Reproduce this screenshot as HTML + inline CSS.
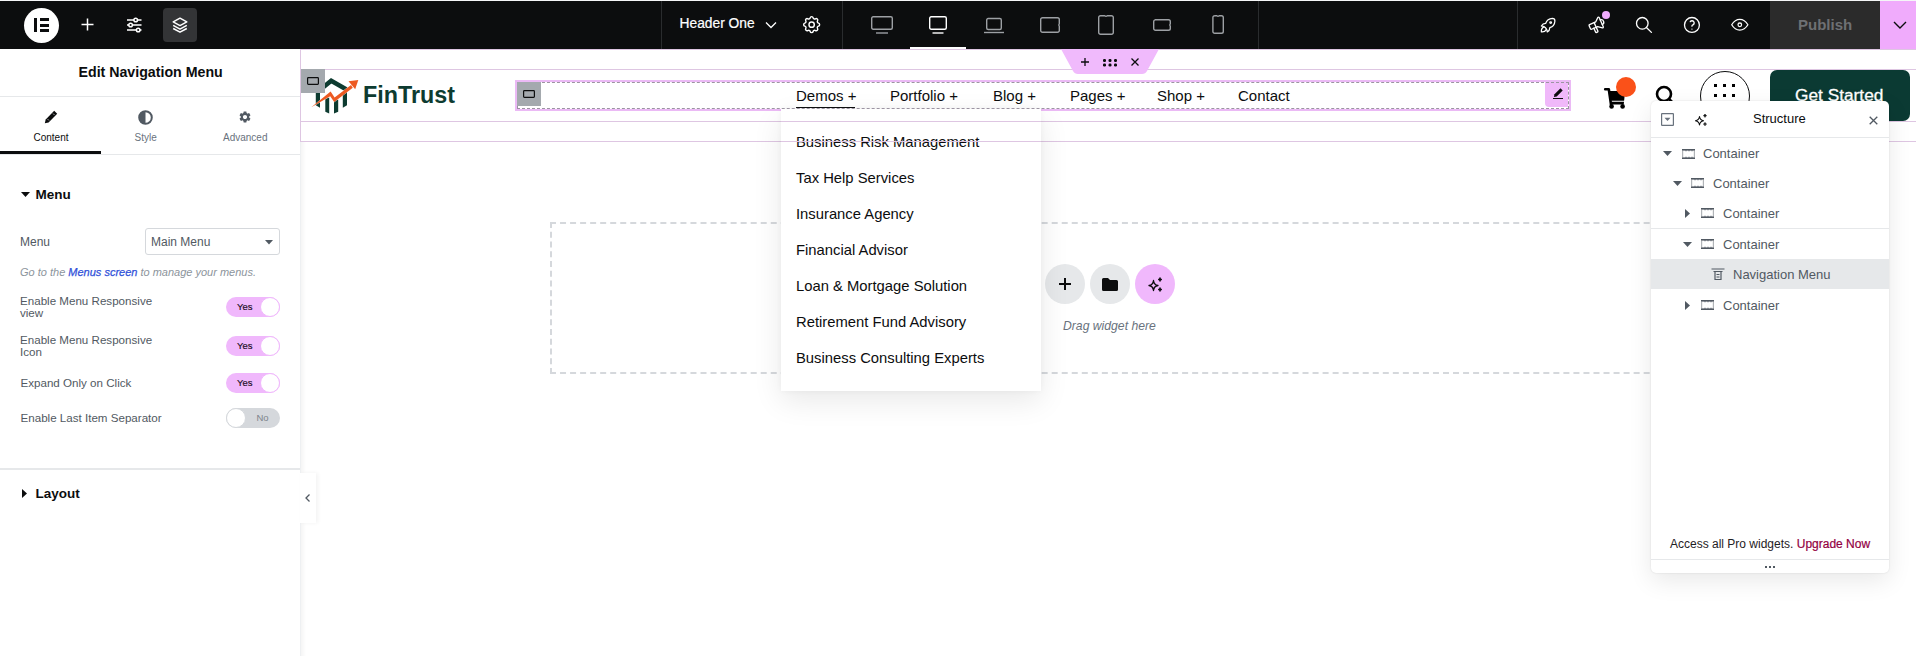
<!DOCTYPE html>
<html><head><meta charset="utf-8">
<style>
*{box-sizing:border-box;margin:0;padding:0}
html,body{width:1916px;height:656px;overflow:hidden;background:#fff;font-family:"Liberation Sans",sans-serif;position:relative}
.a{position:absolute}
.t{position:absolute;white-space:nowrap;line-height:1}
svg{position:absolute;overflow:visible}
#top{position:absolute;left:0;top:0;width:1916px;height:49px;background:#0c0d0e;border-top:1px solid #f5f6f7}
.sep{position:absolute;top:1px;width:1px;height:48px;background:#2a2c2e}
.tg{position:absolute;width:54px;height:20px;border-radius:10px}
.tg.on{background:#f0b8fc}
.tg.off{background:#d5d8dc}
.tg span{position:absolute;top:5.2px;font-size:9.5px;line-height:9.5px;-webkit-text-stroke:0.15px currentColor}
.tg.on span{left:11px;color:#1a0b22}
.tg.off span{left:30.5px;color:#7d848c;-webkit-text-stroke:0}
.tg i{position:absolute;top:0;width:20px;height:20px;border-radius:50%;background:#fff}
.tg.on i{right:0;border:1px solid #f0b8fc}
.tg.off i{left:0;border:1px solid #d5d8dc}
.dd{left:796px;font-size:14.8px;color:#0c0d0e}
.nv{top:88px;font-size:15px;color:#0c0d0e}
.st{font-size:13px;color:#515962}
.ad{width:9px;height:9px;fill:#515962}
.ci{width:13px;height:10px}
</style></head><body>

<!-- ============ TOP BAR ============ -->
<div id="top"></div>
<!-- elementor logo -->
<div class="a" style="left:24px;top:8px;width:35px;height:35px;border-radius:50%;background:#fff"></div>
<div class="a" style="left:34px;top:18px;width:3px;height:14px;background:#0c0d0e"></div>
<div class="a" style="left:40px;top:18px;width:9px;height:3px;background:#0c0d0e"></div>
<div class="a" style="left:40px;top:23.5px;width:9px;height:3px;background:#0c0d0e"></div>
<div class="a" style="left:40px;top:29px;width:9px;height:3px;background:#0c0d0e"></div>
<!-- plus -->
<svg style="left:81px;top:18px" width="13" height="13" viewBox="0 0 13 13"><path d="M6.5 0.5v12M0.5 6.5h12" stroke="#fff" stroke-width="1.5"/></svg>
<!-- sliders -->
<svg style="left:126px;top:17px" width="16" height="16" viewBox="0 0 16 16" fill="none" stroke="#fff" stroke-width="1.5"><path d="M1 3h14.5M1 8h14.5M1 13h14.5" /><circle cx="9.7" cy="3" r="1.8" fill="#0c0d0e"/><circle cx="4.6" cy="8" r="1.8" fill="#0c0d0e"/><circle cx="12.2" cy="13" r="1.8" fill="#0c0d0e"/></svg>
<!-- layers -->
<div class="a" style="left:163px;top:8px;width:34px;height:34px;border-radius:4px;background:#333436"></div>
<svg style="left:172px;top:17px" width="16" height="16" viewBox="0 0 16 16" fill="none" stroke="#fff" stroke-width="1.5" stroke-linejoin="round"><path d="M8 1.2L14.8 4.9L8 8.6L1.2 4.9Z"/><path d="M1.2 8.4L8 12.1L14.8 8.4"/><path d="M1.2 11.5L8 15.2L14.8 11.5"/></svg>

<div class="sep" style="left:661px"></div>
<div class="t" style="left:679.5px;top:17px;font-size:13.8px;color:#fff;-webkit-text-stroke:0.2px #fff">Header One</div>
<svg style="left:765px;top:21px" width="12" height="8" viewBox="0 0 12 8" fill="none" stroke="#fff" stroke-width="1.3"><path d="M1 1.5L6 6.5L11 1.5"/></svg>
<!-- gear -->
<svg style="left:801.3px;top:14.3px" width="21.3" height="21.3" viewBox="0 0 24 24" fill="none" stroke="#fff" stroke-width="1.6" stroke-linecap="round" stroke-linejoin="round"><path d="M10.325 4.317c.426 -1.756 2.924 -1.756 3.35 0a1.724 1.724 0 0 0 2.573 1.066c1.543 -.94 3.31 .826 2.37 2.37a1.724 1.724 0 0 0 1.065 2.572c1.756 .426 1.756 2.924 0 3.35a1.724 1.724 0 0 0 -1.066 2.573c.94 1.543 -.826 3.31 -2.37 2.37a1.724 1.724 0 0 0 -2.572 1.065c-.426 1.756 -2.924 1.756 -3.35 0a1.724 1.724 0 0 0 -2.573 -1.066c-1.543 .94 -3.31 -.826 -2.37 -2.37a1.724 1.724 0 0 0 -1.065 -2.572c-1.756 -.426 -1.756 -2.924 0 -3.35a1.724 1.724 0 0 0 1.066 -2.573c-.94 -1.543 .826 -3.31 2.37 -2.37c1 .608 2.296 .07 2.572 -1.065z"/><circle cx="12" cy="12" r="3"/></svg>
<div class="sep" style="left:842px"></div>

<!-- devices -->
<svg style="left:871px;top:16px" width="22" height="18" viewBox="0 0 22 18" fill="none" stroke="#9da0a4" stroke-width="1.4"><rect x="0.7" y="0.7" width="20.6" height="12.6" rx="1.5"/><path d="M5 17h12"/></svg>
<svg style="left:929px;top:16px" width="18" height="18" viewBox="0 0 18 18" fill="none" stroke="#fff" stroke-width="1.4"><rect x="0.7" y="0.7" width="16.6" height="12.6" rx="1.5"/><path d="M3.5 17h11"/></svg>
<div class="a" style="left:910px;top:47px;width:56px;height:2px;background:#fff"></div>
<svg style="left:984px;top:17px" width="20" height="17" viewBox="0 0 20 17" fill="none" stroke="#9da0a4" stroke-width="1.4"><rect x="2.7" y="1.5" width="14.6" height="11" rx="1.5"/><path d="M0 15.5h20"/></svg>
<svg style="left:1040px;top:17px" width="20" height="16" viewBox="0 0 20 16" fill="none" stroke="#9da0a4" stroke-width="1.4"><path d="M2.5 0.7h15a1.8 1.8 0 0 1 1.8 1.8v4.1q-1 1.4 0 2.8v4.1a1.8 1.8 0 0 1-1.8 1.8h-15a1.8 1.8 0 0 1-1.8-1.8v-11a1.8 1.8 0 0 1 1.8-1.8z"/></svg>
<svg style="left:1098px;top:15px" width="16" height="20" viewBox="0 0 16 20" fill="none" stroke="#9da0a4" stroke-width="1.4"><path d="M2.5 0.7h4.1q1.4 1 2.8 0h4.1a1.8 1.8 0 0 1 1.8 1.8v15a1.8 1.8 0 0 1-1.8 1.8h-11a1.8 1.8 0 0 1-1.8-1.8v-15a1.8 1.8 0 0 1 1.8-1.8z"/></svg>
<svg style="left:1153px;top:19px" width="18" height="12" viewBox="0 0 18 12" fill="none" stroke="#9da0a4" stroke-width="1.4"><path d="M2.5 0.7h13a1.8 1.8 0 0 1 1.8 1.8v2.2q-1 1.3 0 2.6v2.2a1.8 1.8 0 0 1-1.8 1.8h-13a1.8 1.8 0 0 1-1.8-1.8v-6.8a1.8 1.8 0 0 1 1.8-1.8z"/></svg>
<svg style="left:1212px;top:15px" width="12" height="19" viewBox="0 0 12 19" fill="none" stroke="#9da0a4" stroke-width="1.4"><path d="M2.5 0.7h2.2q1.3 1 2.6 0h2.2a1.8 1.8 0 0 1 1.8 1.8v14a1.8 1.8 0 0 1-1.8 1.8h-6.8a1.8 1.8 0 0 1-1.8-1.8v-14a1.8 1.8 0 0 1 1.8-1.8z"/></svg>
<div class="sep" style="left:1258px"></div>
<div class="sep" style="left:1517px"></div>

<!-- rocket -->
<svg style="left:1537.7px;top:14.9px" width="20.3" height="20.3" viewBox="0 0 24 24" fill="none" stroke="#fff" stroke-width="1.5" stroke-linecap="round" stroke-linejoin="round"><path d="M4 13a8 8 0 0 1 7 7a6 6 0 0 0 3 -5a9 9 0 0 0 6 -8a3 3 0 0 0 -3 -3a9 9 0 0 0 -8 6a6 6 0 0 0 -5 3"/><path d="M7 14a6 6 0 0 0 -3 6a6 6 0 0 0 6 -3"/><circle cx="15" cy="9" r="1"/></svg>
<!-- megaphone -->
<svg style="left:1587px;top:15.3px" width="20" height="20" viewBox="0 0 24 24" fill="none" stroke="#fff" stroke-width="1.6" stroke-linecap="round" stroke-linejoin="round"><g transform="rotate(-24 12 12)"><path d="M18 8a3 3 0 0 1 0 6"/><path d="M10 8v11a1 1 0 0 1 -1 1h-1a1 1 0 0 1 -1 -1v-5"/><path d="M12 8l4.524 -3.77a.9 .9 0 0 1 1.476 .692v12.156a.9 .9 0 0 1 -1.476 .692l-4.524 -3.77h-8a1 1 0 0 1 -1 -1v-4a1 1 0 0 1 1 -1h8"/></g></svg>
<div class="a" style="left:1602px;top:11px;width:8px;height:8px;border-radius:50%;background:#f0abfc"></div>
<!-- search -->
<svg style="left:1633.8px;top:15.2px" width="19.9" height="19.9" viewBox="0 0 24 24" fill="none" stroke="#fff" stroke-width="1.6" stroke-linecap="round" stroke-linejoin="round"><circle cx="10" cy="10" r="7"/><path d="M21 21l-6 -6"/></svg>
<!-- help -->
<svg style="left:1682px;top:15.1px" width="19.9" height="19.9" viewBox="0 0 24 24" fill="none" stroke="#fff" stroke-width="1.6" stroke-linecap="round" stroke-linejoin="round"><circle cx="12" cy="12" r="9"/><path d="M12 17v.01"/><path d="M12 13.5a1.5 1.5 0 0 1 1 -1.5a2.6 2.6 0 1 0 -3 -4"/></svg>
<!-- eye -->
<svg style="left:1729.2px;top:14.1px" width="21.6" height="21.6" viewBox="0 0 24 24" fill="none" stroke="#fff" stroke-width="1.4" stroke-linecap="round" stroke-linejoin="round"><path d="M10 12a2 2 0 1 0 4 0a2 2 0 0 0 -4 0"/><path d="M21 12c-2.4 4 -5.4 6 -9 6c-3.6 0 -6.6 -2 -9 -6c2.4 -4 5.4 -6 9 -6c3.6 0 6.6 2 9 6"/></svg>

<div class="a" style="left:1770px;top:1px;width:110px;height:48px;background:#2b2b2b"></div>
<div class="t" style="left:1798px;top:17px;font-size:15px;font-weight:bold;color:#6e7073">Publish</div>
<div class="a" style="left:1880px;top:1px;width:36px;height:48px;background:#f0abfc"></div>
<svg style="left:1893px;top:21px" width="14" height="8" viewBox="0 0 14 8" fill="none" stroke="#0c0d0e" stroke-width="1.4"><path d="M1 1l6 6 6-6"/></svg>


<!-- ============ LEFT PANEL ============ -->
<div id="panel" class="a" style="left:0;top:49px;width:300px;height:607px;background:#fff"></div>
<div class="a" style="left:300px;top:49px;width:1px;height:607px;background:#eef0f2"></div>
<div class="t" style="left:78.5px;top:64.8px;font-size:14.2px;font-weight:bold;color:#0c0d0e">Edit Navigation Menu</div>
<div class="a" style="left:0;top:96px;width:300px;height:1px;background:#e6e8ea"></div>
<!-- tabs -->
<svg style="left:44px;top:110px" width="14" height="14" viewBox="0 0 14 14"><path d="M10.2 0.8l3 3-8.6 8.6-3.8.9.9-3.8z" fill="#0c0d0e"/><path d="M9 3.5l1.5 1.5M3.5 9l1.5 1.5" stroke="#fff" stroke-width="0.6"/></svg>
<div class="t" style="left:33.5px;top:132.5px;font-size:10px;color:#0c0d0e">Content</div>
<svg style="left:138px;top:110px" width="15" height="15" viewBox="0 0 15 15"><circle cx="7.5" cy="7.5" r="6.3" fill="none" stroke="#515962" stroke-width="2"/><path d="M7.5 1.2a6.3 6.3 0 0 0 0 12.6z" fill="#515962"/></svg>
<div class="t" style="left:134.5px;top:132.5px;font-size:10px;color:#69727d">Style</div>
<svg style="left:238px;top:110px" width="14" height="14" viewBox="0 0 24 24"><path fill="#515962" d="M19.14 12.94c.04-.3.06-.61.06-.94 0-.32-.02-.64-.07-.94l2.03-1.58c.18-.14.23-.41.12-.61l-1.92-3.32c-.12-.22-.37-.29-.59-.22l-2.39.96c-.5-.38-1.03-.7-1.62-.94l-.36-2.54c-.04-.24-.24-.41-.48-.41h-3.84c-.24 0-.43.17-.47.41l-.36 2.54c-.59.24-1.13.57-1.62.94l-2.39-.96c-.22-.08-.47 0-.59.22L2.74 8.87c-.12.21-.08.47.12.61l2.03 1.58c-.05.3-.09.63-.09.94s.02.64.07.94l-2.03 1.58c-.18.14-.23.41-.12.61l1.92 3.32c.12.22.37.29.59.22l2.39-.96c.5.38 1.03.7 1.62.94l.36 2.54c.05.24.24.41.48.41h3.84c.24 0 .44-.17.47-.41l.36-2.54c.59-.24 1.13-.56 1.62-.94l2.39.96c.22.08.47 0 .59-.22l1.92-3.32c.12-.22.07-.47-.12-.61l-2.01-1.58zM12 15.6c-1.98 0-3.6-1.62-3.6-3.6s1.62-3.6 3.6-3.6 3.6 1.62 3.6 3.6-1.62 3.6-3.6 3.6z"/></svg>
<div class="t" style="left:223px;top:132.5px;font-size:10px;color:#69727d">Advanced</div>
<div class="a" style="left:0;top:154px;width:300px;height:1px;background:#e6e8ea"></div>
<div class="a" style="left:0;top:151px;width:101px;height:3px;background:#0c0d0e"></div>

<!-- Menu section -->
<svg style="left:21px;top:192px" width="9" height="5" viewBox="0 0 9 5"><path d="M0 0h9L4.5 5z" fill="#0c0d0e"/></svg>
<div class="t" style="left:35.5px;top:187.5px;font-size:13.5px;font-weight:bold;color:#0c0d0e">Menu</div>
<div class="t" style="left:20px;top:236px;font-size:12px;color:#515962">Menu</div>
<div class="a" style="left:145px;top:228px;width:135px;height:27px;border:1px solid #d5d8dc;border-radius:3px"></div>
<div class="t" style="left:151px;top:236px;font-size:12px;color:#515962">Main Menu</div>
<svg style="left:265px;top:240px" width="8" height="5" viewBox="0 0 8 5"><path d="M0 0h8L4 4.5z" fill="#515962"/></svg>
<div class="t" style="left:20px;top:267px;font-size:11px;font-style:italic;color:#8c949c">Go to the <span style="color:#3152d9;-webkit-text-stroke:0.25px #3152d9">Menus screen</span> to manage your menus.</div>

<div class="t" style="left:20px;top:295px;font-size:11.6px;line-height:12px;color:#515962;white-space:normal;width:140px">Enable Menu Responsive view</div>
<div class="t" style="left:20px;top:334px;font-size:11.6px;line-height:12px;color:#515962;white-space:normal;width:140px">Enable Menu Responsive Icon</div>
<div class="t" style="left:20.5px;top:377.3px;font-size:11.6px;color:#515962">Expand Only on Click</div>
<div class="t" style="left:20.5px;top:412.3px;font-size:11.6px;color:#515962">Enable Last Item Separator</div>

<div class="tg on" style="left:226px;top:297px"><span>Yes</span><i></i></div>
<div class="tg on" style="left:226px;top:336px"><span>Yes</span><i></i></div>
<div class="tg on" style="left:226px;top:373px"><span>Yes</span><i></i></div>
<div class="tg off" style="left:226px;top:408px"><span>No</span><i></i></div>

<div class="a" style="left:0;top:468px;width:300px;height:2px;background:#e6e8ea"></div>
<svg style="left:22px;top:489px" width="5" height="9" viewBox="0 0 5 9"><path d="M0 0v9L5 4.5z" fill="#0c0d0e"/></svg>
<div class="t" style="left:35.5px;top:487px;font-size:13.5px;font-weight:bold;color:#0c0d0e">Layout</div>
<!-- ============ CANVAS ============ -->
<div id="canvas" class="a" style="left:301px;top:49px;width:1615px;height:607px;background:#fff"></div>
<!-- panel shadow on canvas -->
<div class="a" style="left:301px;top:142px;width:5px;height:514px;background:linear-gradient(to right,rgba(0,0,0,.04),rgba(0,0,0,0))"></div>

<!-- dashed drop area -->
<div class="a" style="left:550px;top:222px;width:1200px;height:152px;border:2px dashed #d5d8dc"></div>
<div class="a" style="left:1045px;top:264px;width:40px;height:40px;border-radius:50%;background:#e6e8ea"></div>
<svg style="left:1059px;top:278px" width="12" height="12" viewBox="0 0 12 12"><path d="M6 0v12M0 6h12" stroke="#0c0d0e" stroke-width="2"/></svg>
<div class="a" style="left:1090px;top:264px;width:40px;height:40px;border-radius:50%;background:#e6e8ea"></div>
<svg style="left:1102px;top:278px" width="16" height="13" viewBox="0 0 16 13"><path d="M1.5 0h4.5l2 2h6.5a1.5 1.5 0 0 1 1.5 1.5v8a1.5 1.5 0 0 1-1.5 1.5h-13a1.5 1.5 0 0 1-1.5-1.5v-10a1.5 1.5 0 0 1 1.5-1.5z" fill="#0c0d0e"/></svg>
<div class="a" style="left:1135px;top:264px;width:40px;height:40px;border-radius:50%;background:#f0b8fc"></div>
<svg style="left:1148px;top:277px" width="16" height="15" viewBox="0 0 16 15"><path d="M5.5 3.5Q6 8 10 8.5Q6 9 5.5 13.5Q5 9 1 8.5Q5 8 5.5 3.5z" fill="none" stroke="#0c0d0e" stroke-width="1.3" stroke-linejoin="round"/><path d="M12 0.5Q12.3 2.2 14 2.5Q12.3 2.8 12 4.5Q11.7 2.8 10 2.5Q11.7 2.2 12 0.5zM12 10.5Q12.3 12.2 14 12.5Q12.3 12.8 12 14.5Q11.7 12.8 10 12.5Q11.7 12.2 12 10.5z" fill="#0c0d0e" stroke="#0c0d0e" stroke-width="0.8"/></svg>
<div class="t" style="left:1063px;top:320px;font-size:12.2px;font-style:italic;color:#69727d">Drag widget here</div>

<!-- header container lines -->
<div class="a" style="left:300px;top:49px;width:1616px;height:93px;border:1px solid #dec6e2;border-right:0"></div>
<div class="a" style="left:301px;top:69px;width:1615px;height:1px;background:#dec6e2"></div>
<div class="a" style="left:301px;top:121px;width:1615px;height:1px;background:#dec6e2"></div>

<!-- logo -->
<svg style="left:306px;top:72px" width="60" height="46" viewBox="306 72 60 46">
 <path d="M318 91.5L331.2 80.8L346.5 89.5" fill="none" stroke="#0d3b30" stroke-width="4.6" stroke-linejoin="miter" stroke-miterlimit="10"/>
 <path d="M315.8 93L320 93L320 107.7L315.8 105.2Z" fill="#0d3b30"/>
 <path d="M325.3 98.8L329.2 97.5L329.2 113.5L325.3 111.8Z" fill="#0d3b30"/>
 <path d="M334 100.5L338.2 99.5L338.2 111.8L334 113.5Z" fill="#0d3b30"/>
 <path d="M342.8 93L347 91L347 105.2L342.8 107.7Z" fill="#0d3b30"/>
 <path d="M311.3 107.3L330.6 91.6L334.6 97.4L351 85L352.8 87.8L334.2 102L330.2 96.2Z" fill="#ed5a22" stroke="#fff" stroke-width="0.6" paint-order="stroke"/>
 <path d="M348.5 81.2L358.3 80L355.2 89.2Z" fill="#ed5a22"/>
</svg>
<div class="t" style="left:363px;top:84px;font-size:23.3px;font-weight:bold;color:#0d3b30">FinTrust</div>

<!-- container handle -->
<div class="a" style="left:301px;top:69px;width:24px;height:24px;background:#a4a9ae"></div>
<svg style="left:307px;top:77px" width="12" height="8" viewBox="0 0 12 8"><rect x="0.6" y="0.6" width="10.8" height="6.8" rx="0.8" fill="none" stroke="#0c0d0e" stroke-width="1.2"/></svg>

<div class="a" style="left:515px;top:80px;width:1056px;height:31px;border:2px solid #ebbaf5"></div>
<!-- dropdown -->
<div class="a" style="left:781px;top:109px;width:260px;height:282px;background:#fff;box-shadow:0 10px 28px rgba(0,0,0,.09),0 0 6px rgba(0,0,0,.04)"></div>
<div class="t dd" style="top:134.7px">Business Risk Management</div>
<div class="t dd" style="top:170.7px">Tax Help Services</div>
<div class="t dd" style="top:206.7px">Insurance Agency</div>
<div class="t dd" style="top:242.7px">Financial Advisor</div>
<div class="t dd" style="top:278.7px">Loan &amp; Mortgage Solution</div>
<div class="t dd" style="top:314.7px">Retirement Fund Advisory</div>
<div class="t dd" style="top:350.7px">Business Consulting Experts</div>
<!-- overlay lines over dropdown -->
<div class="a" style="left:781px;top:121px;width:260px;height:1px;background:#dec6e2"></div>
<div class="a" style="left:781px;top:141px;width:260px;height:1px;background:#dec6e2"></div>

<!-- nav widget -->
<div class="a" style="left:1545px;top:82px;width:23px;height:24.5px;background:#f0b8fa;border-bottom-left-radius:4px"></div>
<svg style="left:1553px;top:88px" width="10" height="11" viewBox="0 0 10 11"><path d="M7.5 0.3l2.2 2.2-6 6-2.8.6.6-2.8z" fill="#0c0d0e"/><path d="M0 10.5h10" stroke="#0c0d0e" stroke-width="1"/></svg>

<div class="a" style="left:517px;top:82px;width:1052px;height:27px;border:1px dashed #9c94a2"></div>
<div class="a" style="left:517px;top:82px;width:24px;height:24px;background:#a4a9ae"></div>
<svg style="left:523px;top:90px" width="12" height="8" viewBox="0 0 12 8"><rect x="0.6" y="0.6" width="10.8" height="6.8" rx="0.8" fill="none" stroke="#0c0d0e" stroke-width="1.2"/></svg>
<div class="t nv" style="left:796px">Demos +</div>
<div class="a" style="left:796px;top:106.7px;width:59px;height:1.5px;background:#0c0d0e"></div>
<div class="t nv" style="left:890px">Portfolio +</div>
<div class="t nv" style="left:993px">Blog +</div>
<div class="t nv" style="left:1070px">Pages +</div>
<div class="t nv" style="left:1157px">Shop +</div>
<div class="t nv" style="left:1238px">Contact</div>

<!-- cart -->
<svg style="left:1600px;top:84px" width="30" height="28" viewBox="1600 84 30 28"><path d="M1605.2 89.3h3.6l2.3 15.8" fill="none" stroke="#000" stroke-width="2.6" stroke-linecap="round" stroke-linejoin="round"/><path d="M1609.3 91h15.9l-1.1 9.7h-13.4z" fill="#000"/><path d="M1611 101.8h13l-.3 2.6h-12.3z" fill="#000"/><circle cx="1611.6" cy="106.4" r="2.3" fill="#000"/><circle cx="1622.6" cy="106.4" r="2.3" fill="#000"/></svg>
<div class="a" style="left:1616px;top:77px;width:20px;height:20px;border-radius:50%;background:#fa5119"></div>
<!-- search -->
<svg style="left:1655px;top:85px" width="20" height="20" viewBox="0 0 20 20"><circle cx="9" cy="9" r="7" fill="none" stroke="#000" stroke-width="2.6"/><path d="M14 14l5 5" stroke="#000" stroke-width="2.6"/></svg>
<!-- menu circle -->
<div class="a" style="left:1700px;top:71px;width:50px;height:50px;border-radius:50%;border:1.3px solid #0c0d0e"></div>
<div class="a" style="left:1714px;top:84px;width:3px;height:3px;background:#000;box-shadow:9px 0 #000,18px 0 #000,0 10px #000,9px 10px #000,18px 10px #000"></div>
<!-- get started -->
<div class="a" style="left:1770px;top:70px;width:140px;height:51px;border-radius:7px;background:#0b3a33"></div>
<div class="t" style="left:1795px;top:87px;font-size:17.3px;color:#fff;-webkit-text-stroke:0.3px #fff">Get Started</div>

<!-- top handle -->
<svg style="left:1061px;top:49px" width="98" height="25" viewBox="0 0 98 25"><path d="M0 0H98L86 22Q84.5 25 81 25H17Q13.5 25 12 22Z" fill="#f0bafc"/></svg>
<svg style="left:1081px;top:58px" width="8" height="8" viewBox="0 0 8 8"><path d="M4 0v8M0 4h8" stroke="#0c0d0e" stroke-width="1.3"/></svg>
<div class="a" style="left:1103px;top:59px;width:2.5px;height:2.5px;border-radius:50%;background:#0c0d0e;box-shadow:5.5px 0 #0c0d0e,11px 0 #0c0d0e,0 4.5px #0c0d0e,5.5px 4.5px #0c0d0e,11px 4.5px #0c0d0e"></div>
<svg style="left:1131px;top:58px" width="8" height="8" viewBox="0 0 8 8"><path d="M0.5 0.5l7 7M7.5 0.5l-7 7" stroke="#0c0d0e" stroke-width="1.3"/></svg>


<!-- collapse tab -->
<div class="a" style="left:300px;top:473px;width:16px;height:50px;background:#fff;box-shadow:2px 0 4px rgba(0,0,0,.05)"></div>
<svg style="left:305px;top:494px" width="5" height="8" viewBox="0 0 5 8" fill="none" stroke="#515962" stroke-width="1.3"><path d="M4.5 0.5L1 4l3.5 3.5"/></svg>


<!-- ============ STRUCTURE PANEL ============ -->
<div id="struct" class="a" style="left:1651px;top:101px;width:238px;height:472px;background:#fff;border-radius:5px;box-shadow:0 0 2px rgba(0,0,0,.12),0 8px 24px rgba(0,0,0,.09)"></div>
<svg style="left:1661px;top:113px" width="13" height="13" viewBox="0 0 13 13"><rect x="0.6" y="0.6" width="11.8" height="11.8" rx="0.5" fill="none" stroke="#69727d" stroke-width="1.2"/><path d="M3.5 4.8h6L6.5 8z" fill="#69727d"/></svg>
<svg style="left:1695px;top:114px" width="13" height="12" viewBox="0 0 13 12"><path d="M4.5 2.5Q5 6 8.5 6.8Q5 7.5 4.5 11Q4 7.5 0.5 6.8Q4 6 4.5 2.5z" fill="none" stroke="#0c0d0e" stroke-width="1.1" stroke-linejoin="round"/><path d="M10 0Q10.2 1.4 11.6 1.7Q10.2 2 10 3.4Q9.8 2 8.4 1.7Q9.8 1.4 10 0zM10 8.4Q10.2 9.8 11.6 10.1Q10.2 10.4 10 11.8Q9.8 10.4 8.4 10.1Q9.8 9.8 10 8.4z" fill="#0c0d0e" stroke="#0c0d0e" stroke-width="0.6"/></svg>
<div class="t" style="left:1753px;top:112px;font-size:13px;color:#0c0d0e">Structure</div>
<svg style="left:1869px;top:116px" width="9" height="9" viewBox="0 0 9 9"><path d="M0.7 0.7l7.6 7.6M8.3 0.7l-7.6 7.6" stroke="#515962" stroke-width="1.3"/></svg>
<div class="a" style="left:1651px;top:137px;width:238px;height:1px;background:#e6e8ea"></div>

<div class="a" style="left:1651px;top:259px;width:238px;height:30px;background:#e6e8ea"></div>
<div class="a" style="left:1651px;top:228px;width:238px;height:1px;background:#e6e8ea"></div>

<svg class="ad" style="left:1663px;top:151px"><path d="M0 0h9L4.5 5z"/></svg>
<svg class="ci" style="left:1682px;top:148.5px"><use href="#cont"/></svg>
<div class="t st" style="left:1703px;top:147px">Container</div>

<svg class="ad" style="left:1673px;top:181px"><path d="M0 0h9L4.5 5z"/></svg>
<svg class="ci" style="left:1691px;top:178px"><use href="#cont"/></svg>
<div class="t st" style="left:1713px;top:177px">Container</div>

<svg class="ad" style="left:1685px;top:209px"><path d="M0 0v9L5 4.5z"/></svg>
<svg class="ci" style="left:1701px;top:208px"><use href="#cont"/></svg>
<div class="t st" style="left:1723px;top:207px">Container</div>

<svg class="ad" style="left:1683px;top:242px"><path d="M0 0h9L4.5 5z"/></svg>
<svg class="ci" style="left:1701px;top:239px"><use href="#cont"/></svg>
<div class="t st" style="left:1723px;top:238px">Container</div>

<svg style="left:1711px;top:268px" width="14" height="12" viewBox="0 0 14 12" fill="none" stroke="#515962" stroke-width="1.2"><path d="M0.5 1h13M2.5 3.5h9M4 3.5v8h6v-8M5.5 6.5h3M5.5 9h3"/></svg>
<div class="t st" style="left:1733px;top:268px">Navigation Menu</div>

<svg class="ad" style="left:1685px;top:301px"><path d="M0 0v9L5 4.5z"/></svg>
<svg class="ci" style="left:1701px;top:300px"><use href="#cont"/></svg>
<div class="t st" style="left:1723px;top:299px">Container</div>

<div class="t" style="left:1670px;top:538px;font-size:12px;color:#1f2124">Access all Pro widgets. <span style="color:#93003f;-webkit-text-stroke:0.2px #93003f">Upgrade Now</span></div>
<div class="a" style="left:1651px;top:559px;width:238px;height:1px;background:#e6e8ea"></div>
<div class="a" style="left:1765px;top:566px;width:2px;height:2px;background:#515962;box-shadow:4px 0 #515962,8px 0 #515962"></div>

<svg width="0" height="0" style="position:absolute"><defs><g id="cont"><rect x="0" y="0" width="13" height="1.6" fill="#515962"/><rect x="0" y="8.4" width="13" height="1.6" fill="#515962"/><path d="M3 1.6l1 1 1-1zM6 1.6l1 1 1-1zM9 1.6l1 1 1-1zM3 8.4l1-1 1 1zM6 8.4l1-1 1 1zM9 8.4l1-1 1 1z" fill="#515962"/><rect x="0" y="1.6" width="1.2" height="6.8" fill="#515962" opacity=".45"/><rect x="11.8" y="1.6" width="1.2" height="6.8" fill="#515962" opacity=".45"/></g></defs></svg>


</body></html>
